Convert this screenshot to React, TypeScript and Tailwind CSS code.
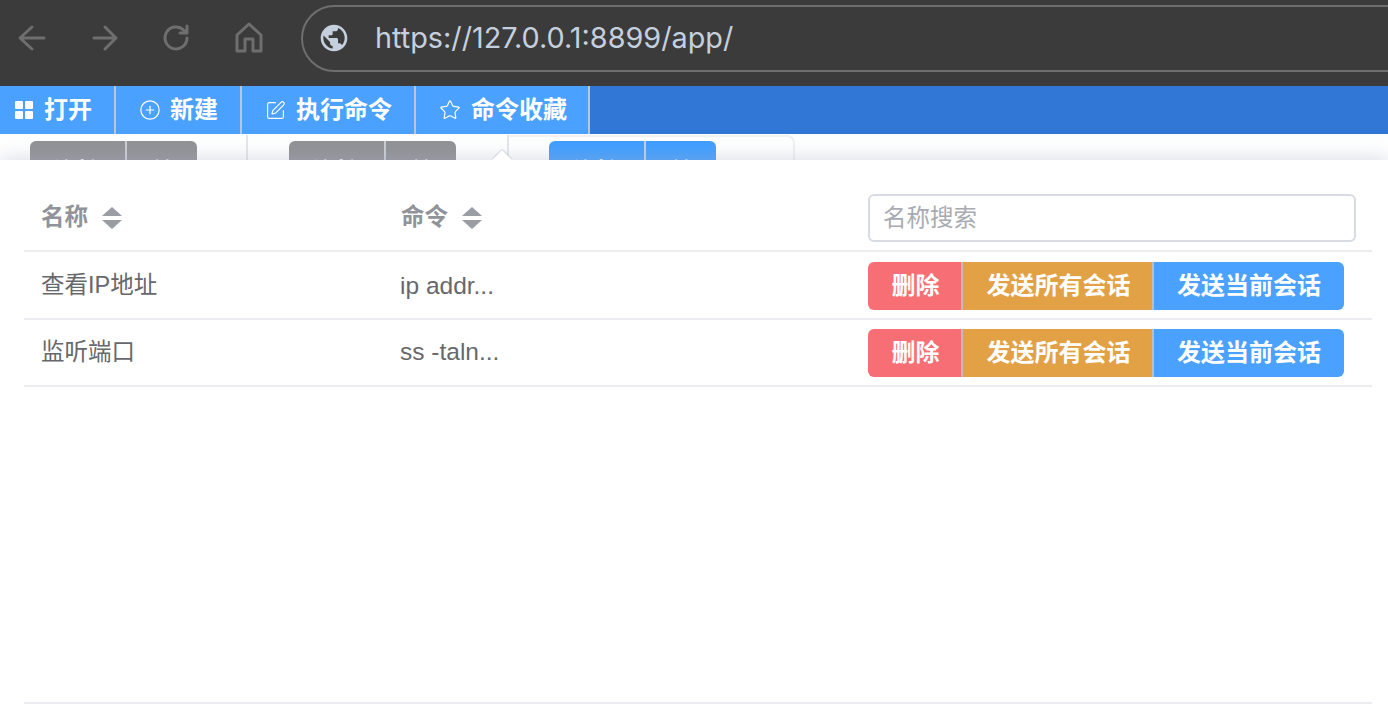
import { CirclePlus, SquarePen, Star } from "lucide-react";
import { MdPublic } from "react-icons/md";

const cjk = "font-['Liberation_Sans','Noto_Sans_CJK_SC',sans-serif]";

const commands = [
  { name: "查看IP地址", command: "ip addr...", rowClass: "h-[68px] pt-[2px]" },
  { name: "监听端口", command: "ss -taln...", rowClass: "h-[67px]" },
];

function NavIcon({ children }: { children: React.ReactNode }) {
  return (
    <svg
      viewBox="0 0 32 32"
      className="h-8 w-8"
      fill="none"
      stroke="#6e6e6e"
      strokeWidth="3"
      strokeLinecap="round"
      strokeLinejoin="round"
    >
      {children}
    </svg>
  );
}

function GridIcon() {
  return (
    <svg viewBox="0 0 18 18" className="h-[18px] w-[18px]" fill="#fff">
      <rect x="0" y="0" width="8" height="8" rx="1" />
      <rect x="10" y="0" width="8" height="8" rx="1" />
      <rect x="0" y="10" width="8" height="8" rx="1" />
      <rect x="10" y="10" width="8" height="8" rx="1" />
    </svg>
  );
}

function SortCaret() {
  return (
    <svg viewBox="0 0 20 22" className="h-[22px] w-5" fill="#9a9da4">
      <path d="M10 0 20 9H0Z" />
      <path d="M10 22 0 13h20Z" />
    </svg>
  );
}

function TabButtons({ active }: { active?: boolean }) {
  return (
    <div
      className={`flex h-[40px] w-[167px] overflow-hidden rounded-md text-[24px] font-bold leading-[61px] text-white ${
        active ? "bg-[#409eff]" : "bg-[#919196]"
      }`}
    >
      <span className="w-[97px] border-r-2 border-[#c9ccd3] text-center">连接</span>
      <span className="flex-1 text-center">关</span>
    </div>
  );
}

function ToolItem({
  icon,
  label,
  className,
}: {
  icon: React.ReactNode;
  label: string;
  className: string;
}) {
  return (
    <button
      type="button"
      className={`flex h-full items-center border-r-2 border-[#bcc6d2] bg-[#4aa1ff] text-[24px] font-bold text-white ${className}`}
    >
      {icon}
      {label}
    </button>
  );
}

export default function App() {
  return (
    <div className={`flex h-[722px] w-[1388px] flex-col overflow-hidden bg-white ${cjk}`}>
      <header className="flex h-[86px] shrink-0 items-center overflow-hidden bg-[#3b3b3b] pb-[10px]">
        <div className="flex w-[300px] shrink-0 items-center">
          <div className="ml-[17px]">
            <NavIcon>
              <path d="M27 16H4M15 5 3 16l12 11" />
            </NavIcon>
          </div>
          <div className="ml-[40px]">
            <NavIcon>
              <path d="M5 16h22M16 5l11 11-11 11" />
            </NavIcon>
          </div>
          <div className="ml-[40px]">
            <NavIcon>
              <path d="M26 16a11 11 0 1 1-3.4-8L26 11M26 4v7h-7" />
            </NavIcon>
          </div>
          <div className="ml-[40px]">
            <NavIcon>
              <path d="M4 29V13L16 2l12 11v16h-8V17h-8v12Z" />
            </NavIcon>
          </div>
        </div>
        <div className="ml-px flex h-[67px] w-[1300px] shrink-0 items-center rounded-full border-2 border-[#6e6e6e] pl-[15px]">
          <MdPublic className="h-8 w-8 text-[#c5d0de]" />
          <span className="ml-[25px] font-['Inter',sans-serif] text-[28.8px] text-[#c5d0de]">
            https://127.0.0.1:8899/app/
          </span>
        </div>
      </header>

      <nav className="flex h-[48px] shrink-0 bg-[#3178d6]">
        <ToolItem className="w-[116px] gap-[11px] pl-[15px]" icon={<GridIcon />} label="打开" />
        <ToolItem
          className="w-[126px] gap-[9px] pl-[23px]"
          icon={<CirclePlus className="h-[22px] w-[22px]" strokeWidth={1.3} />}
          label="新建"
        />
        <ToolItem
          className="w-[174px] gap-[10px] pl-[23px]"
          icon={<SquarePen className="h-[21px] w-[21px]" strokeWidth={1.3} />}
          label="执行命令"
        />
        <ToolItem
          className="w-[174px] gap-[10px] pl-[23px]"
          icon={<Star className="h-[22px] w-[22px]" strokeWidth={1.3} />}
          label="命令收藏"
        />
      </nav>

      <div className="flex h-[26px] shrink-0 overflow-hidden pt-px">
        <div className="w-[248px] shrink-0 border-r-2 border-[#e4e6ec] pl-[30px] pt-[6px]">
          <TabButtons />
        </div>
        <div className="w-[261px] shrink-0 border-r-2 border-[#e4e6ec] pl-[41px] pt-[6px]">
          <TabButtons />
        </div>
        <div className="w-[286px] shrink-0 rounded-tr-lg border-r-2 border-t-2 border-[#f0f1f5] pl-[40px] pt-[4px]">
          <TabButtons active />
        </div>
      </div>

      <main className="relative z-10 flex min-h-0 flex-1 flex-col bg-white pl-[24px] pr-[16px] shadow-[0_0_20px_rgba(170,176,196,0.5)]">
        <div className="absolute left-[495px] top-[-7px] h-[14px] w-[14px] rotate-45 bg-white shadow-[-1px_-1px_1px_rgba(200,204,216,0.8)]" />
        <div className="relative grid h-[92px] grid-cols-[360px_468px_1fr] items-center border-b-2 border-[#ebebf0] pt-[26px] text-[23.5px] font-bold text-[#909399]">
          <div className="flex items-center gap-[14px] pl-[17px]">
            名称
            <SortCaret />
          </div>
          <div className="flex items-center gap-[14px] pl-[17px]">
            命令
            <SortCaret />
          </div>
          <div className="pl-[16px] pr-[16px]">
            <input
              readOnly
              placeholder="名称搜索"
              className="h-[48px] w-full rounded-md border-2 border-[#d8dbe3] px-[13px] text-[23.5px] font-normal outline-none placeholder:text-[#a8abb2]"
            />
          </div>
        </div>
        {commands.map((row) => (
          <div
            key={row.name}
            className={`grid grid-cols-[360px_468px_1fr] items-center border-b-2 border-[#ebebf0] text-[#67686c] ${row.rowClass}`}
          >
            <div className="pl-[17px] text-[23.5px]">{row.name}</div>
            <div className="pl-[16px] text-[24.5px]">{row.command}</div>
            <div className="flex pl-[16px] text-[24px] font-bold text-white">
              <button type="button" className="h-[48px] w-[95px] rounded-l-md border-r-2 border-[#c9b8b8] bg-[#f76f75] pl-[2px]">
                删除
              </button>
              <button type="button" className="h-[48px] w-[191px] border-r-2 border-[#b9bec6] bg-[#e3a146] pl-[2px]">
                发送所有会话
              </button>
              <button type="button" className="h-[48px] w-[190px] rounded-r-md bg-[#4aa1ff]">
                发送当前会话
              </button>
            </div>
          </div>
        ))}
        <div className="mt-[315px] border-b-2 border-[#ebebf0]" />
      </main>
    </div>
  );
}
